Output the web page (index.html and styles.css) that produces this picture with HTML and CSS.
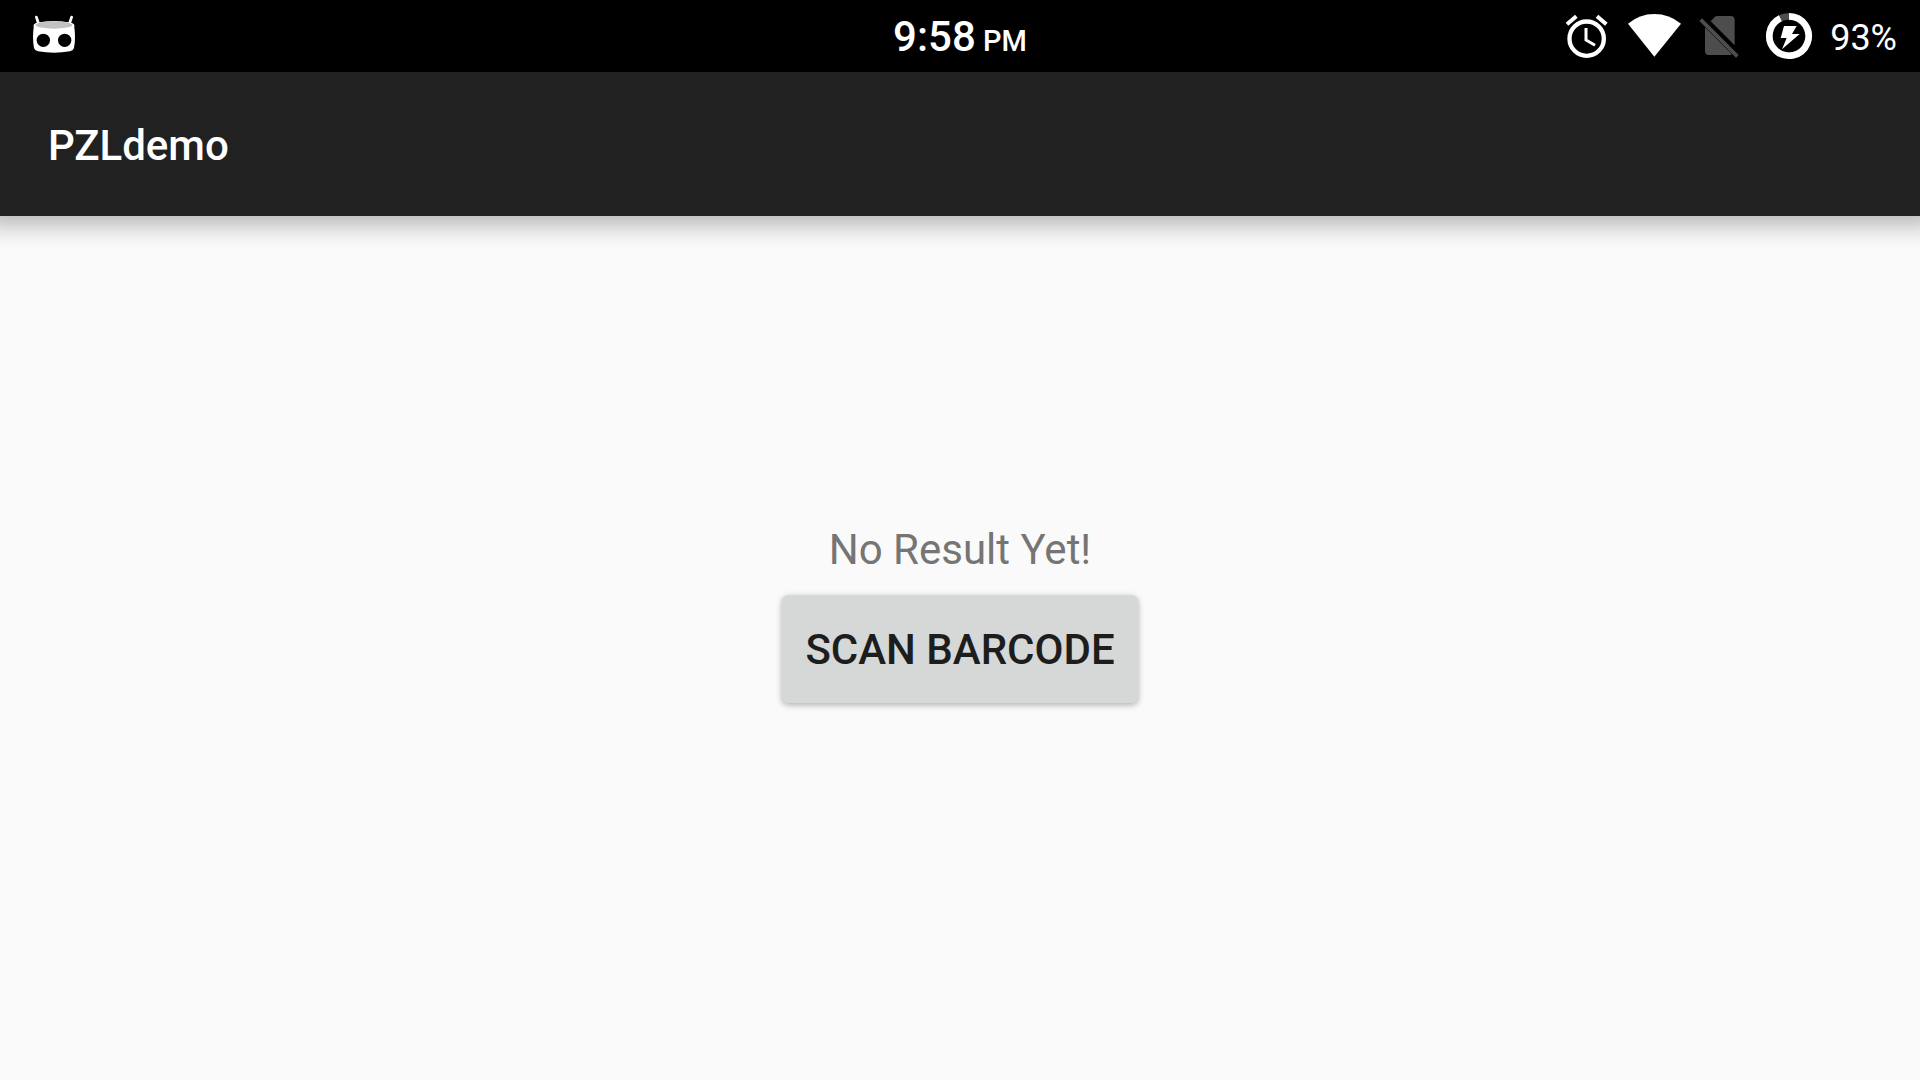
FILE: index.html
```html
<!DOCTYPE html>
<html lang="en">
<head>
<meta charset="utf-8">
<title>PZLdemo</title>
<link rel="stylesheet" href="styles.css">
</head>
<body>
<div class="status-bar">
  <div class="notifications">
    <svg class="icon" width="46" height="72" viewBox="33 0 138 216" role="img" aria-label="System notification">
      <path d="M49 51L56 72M155 51L148 72" stroke="#fff" stroke-width="8" stroke-linecap="round"/>
      <path d="M42 76Q102 92 162 76Q168 112 162 144Q160 152 150 154Q102 162 54 154Q44 152 42 144Q36 112 42 76Z" fill="#fff"/>
      <path d="M41 80Q39 71 50 68Q102 58 154 68Q165 71 163 80Q102 94 41 80Z" fill="#fff"/>
      <ellipse cx="102" cy="75" rx="55" ry="11" fill="#c2c2c2"/>
      <circle cx="70" cy="121" r="20"/>
      <circle cx="134" cy="121" r="20"/>
    </svg>
  </div>
  <div class="clock">9:58<span class="period"> PM</span></div>
  <div class="system-icons">
    <svg class="icon" width="48" height="72" viewBox="36 0 144 216" role="img" aria-label="Alarm">
      <g fill="none" stroke="#fff">
        <circle cx="110" cy="116" r="51.500" stroke-width="13"/>
        <path d="M51 73L79 49M169 73L141 49" stroke-width="12"/>
        <path d="M108 84V120L135 136" stroke-width="9"/>
      </g>
    </svg>
    <svg class="icon" width="56" height="72" viewBox="228 0 168 216" role="img" aria-label="Wi-Fi">
      <path d="M234 71Q268 42 313 42Q358 42 393 71L313 170Z" fill="#fff"/>
    </svg>
    <svg class="icon" width="50" height="72" viewBox="24 0 150 216" role="img" aria-label="No SIM">
      <path d="M62 64L74 51Q77 48 82 48H122Q134 48 134 60V136ZM45 82L126 163Q124 165 120 165H56Q45 165 45 154Z" fill="#4d4d4d"/>
      <path d="M32 59L142 169" stroke="#4d4d4d" stroke-width="11"/>
    </svg>
    <svg class="icon" width="50" height="72" viewBox="222 0 150 216" role="img" aria-label="Battery charging">
      <circle cx="297" cy="108" r="59" fill="none" stroke="#4d4d4d" stroke-width="20"/>
      <path d="M297 49A59 59 0 1 1 271 55" fill="none" stroke="#fff" stroke-width="20"/>
      <path d="M282 78H320L306 102H329L276 148L290 114H272Z" fill="#fff"/>
    </svg>
    <span class="battery-level">93%</span>
  </div>
</div>
<header class="app-bar">
  <h1 class="app-title">PZLdemo</h1>
</header>
<main class="content">
  <p class="result">No Result Yet!</p>
  <button class="scan-button" type="button">SCAN BARCODE</button>
</main>
</body>
</html>
```
FILE: styles.css
```css
* {
  box-sizing: border-box;
}

body {
  display: flex;
  flex-direction: column;
  min-height: 100vh;
  margin: 0;
  background: #fafafa;
  font-family: Roboto, sans-serif;
  font-size: 42px;
  line-height: 50px;
}

.status-bar {
  display: grid;
  grid-template-columns: 1fr auto 1fr;
  align-items: center;
  height: 72px;
  padding: 0 23px;
  background: #000;
  color: #fff;
}

.notifications {
  padding-left: 8px;
}

.icon {
  display: block;
  flex: none;
}

.clock {
  padding-top: 6px;
  font-weight: 500;
}

.period {
  font-size: 29px;
}

.system-icons {
  display: flex;
  justify-content: flex-end;
  align-items: center;
  gap: 16px;
}

.battery-level {
  padding-top: 4px;
  font-size: 36px;
}

.app-bar {
  display: flex;
  align-items: center;
  height: 144px;
  padding: 4px 48px 0;
  background: #212121;
  box-shadow: 0 -8px 24px 16px rgba(0, 0, 0, 0.3);
  clip-path: inset(0 0 -48px);
  color: #fff;
}

.app-title {
  margin: 0;
  font-size: 42px;
  font-weight: 500;
}

.content {
  display: flex;
  flex: 1;
  flex-direction: column;
  align-items: center;
  justify-content: center;
  gap: 20px;
  padding-bottom: 68px;
}

.result {
  margin: 0;
  color: #757575;
}

.scan-button {
  height: 108px;
  padding: 2px 23px 0;
  border: 0;
  border-radius: 6px;
  background: #d6d8d7;
  box-shadow: 0 2px 6px rgba(0, 0, 0, 0.3);
  color: #1d1d1d;
  font: inherit;
  font-weight: 500;
}
```
